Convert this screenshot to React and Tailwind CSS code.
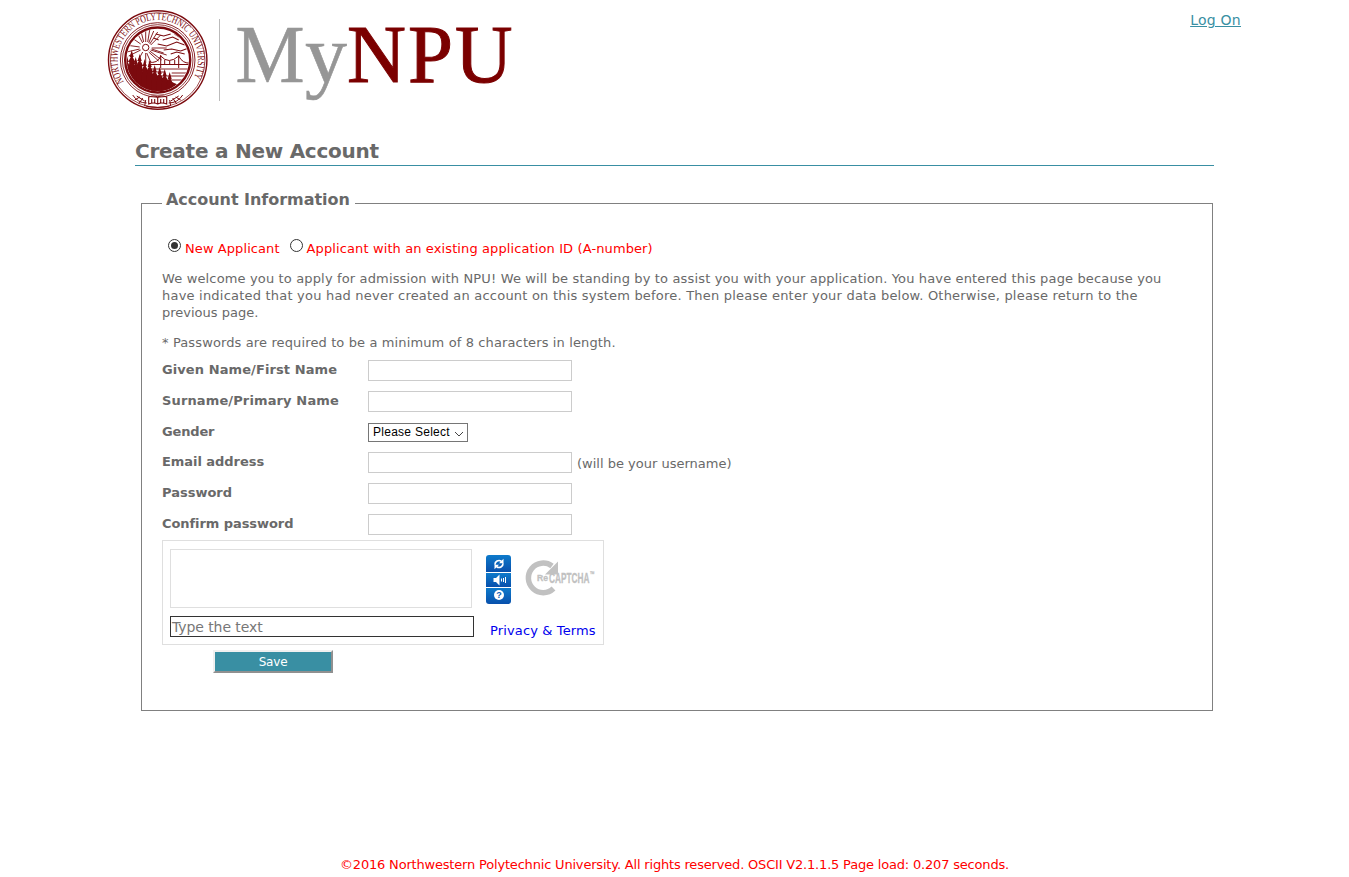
const sans = "font-['DejaVu_Sans','Liberation_Sans',sans-serif]";

function Seal() {
  const trees = [
    [127, 62, 22], [132, 57, 30], [136, 64, 24], [140, 61, 28], [145, 66, 24], [150, 67, 22],
    [155, 72, 18], [160, 74, 14], [165, 76, 11], [170, 79, 8],
  ];
  return (
    <svg className="block h-[102px] w-[102px] shrink-0" viewBox="107.3 9 102 102" fill="none" stroke="#7b0a0e">
      <defs>
        <path id="ring" d="M124.2 81.900 A40.200 40.200 0 1 1 191.800 81.900" />
        <clipPath id="disc"><circle cx="158" cy="60" r="31" /></clipPath>
      </defs>
      <circle cx="158" cy="60" r="49.200" strokeWidth="1.400" />
      <circle cx="158" cy="60" r="47.300" strokeWidth=".7" />
      <circle cx="158" cy="60" r="37.300" strokeWidth=".9" />
      <circle cx="158" cy="60" r="35.300" strokeWidth=".8" />
      <circle cx="158" cy="60" r="32.500" strokeWidth="2.400" />
      <text fill="#7b0a0e" stroke="none" fontSize="10.500" fontFamily="Liberation Serif, serif">
        <textPath href="#ring" textLength="167" lengthAdjust="spacingAndGlyphs">NORTHWESTERN POLYTECHNIC UNIVERSITY</textPath>
      </text>
      <g clipPath="url(#disc)">
        <circle cx="146" cy="47.500" r="3.200" strokeWidth="1" />
        <path strokeWidth=".9" d="M146 42V30M149 43l5-12M151 45l10-10M152 48l15 0M151 50l16 5M149 52l10 9M146 53v10M143 52l-5 9M141 50l-12 6M140 47l-14-2M141 44l-10-7M143 43l-6-11M148 42l2-12M150 44l8-12M140 49l-13 3M144 42l-3-12M152 49l12 4M150 51l12 9M147 53l4 9" />
        <path strokeWidth="1.100" d="M156 34l8 2 7-2M163 40l10-3 6 3M158 44l9 2 10-4 8 3M164 50l8-1 9 2 8-3M171 54l6-2 8 2M154 38l5 2M175 34l6 4" />
        <path strokeWidth="1" d="M149 64.500h42M161 55v13M179 55v13M149 62q9 2 12-6q8 9 18 0q4 8 12 7M165 60v4M170 61v3M175 60v4" />
        <path strokeWidth=".9" d="M148 69h42M150 72h15M172 73h18M155 76h34M163 80h24" />
        <path fill="#7b0a0e" stroke="none" d="M124 66l8 2 8 3 10 1 10 5 10 4 9 4-12 10h-30z" />
        {trees.map(([x, y, h]) => (
          <path key={x} fill="#7b0a0e" stroke="none" d={`M${x} ${y - 7}l2 7-1 0 2.500 5-1 0 1.500 ${h}h-8l1.500-${h}-1 0 2.500-5-1 0z`} />
        ))}
      </g>
      <path strokeWidth="1" d="M133 95q5 8 14 8M183 95q-5 8-14 8M135 100l5-3M139 104l4-6M145 106l1-6M181 100l-5-3M177 104l-4-6M171 106l-1-6M137 96l8 5M179 96l-8 5" />
      <path strokeWidth="1.100" d="M149 97q5-2 9 0q4-2 9 0v7q-5-2-9 0q-4-2-9 0zM158 97v7M152 99v4M155 99v4M161 99v4M164 99v4M146 106q12 3 24 0" />
    </svg>
  );
}

function Wordmark() {
  return (
    <svg className="ml-[13px] block h-[105px] w-[290px]" viewBox="233 5 290 105" fontFamily="Liberation Serif, serif" fontSize="82">
      <g fill="#969696" stroke="#969696" strokeWidth=".6">
        <text x="235.500" y="81.500" textLength="69" lengthAdjust="spacingAndGlyphs">M</text>
        <text x="305" y="81.500" textLength="42" lengthAdjust="spacingAndGlyphs">y</text>
      </g>
      <g fill="#7b0000" stroke="#7b0000" strokeWidth="1">
        <text x="347" y="81.500" textLength="59" lengthAdjust="spacingAndGlyphs">N</text>
        <text x="408" y="81.500" textLength="45" lengthAdjust="spacingAndGlyphs">P</text>
        <text x="455" y="81.500" textLength="57.500" lengthAdjust="spacingAndGlyphs">U</text>
      </g>
    </svg>
  );
}

function Radio({ checked }) {
  return (
    <span className="flex h-[13px] w-[13px] shrink-0 items-center justify-center rounded-full border border-[#333]">
      {checked && <span className="h-[7px] w-[7px] rounded-full bg-[#333]" />}
    </span>
  );
}

function Row({ label, tracking = "", h = "h-[31px]", children }) {
  return (
    <div className={`flex items-start ${h}`}>
      <label className={`w-[206px] text-[13px] leading-[19px] font-bold ${tracking}`}>{label}</label>
      {children}
    </div>
  );
}

const Field = () => <input className="block h-[21px] w-[204px] border border-[#ccc] bg-white" />;

function CaptchaButtons() {
  return (
    <svg className="mt-[6px] ml-[14px] block h-[49px] w-[25px]" viewBox="0 0 25 49">
      <defs>
        <linearGradient id="blue" x2="0" y2="1"><stop stopColor="#0d7acb" /><stop offset="1" stopColor="#0850ac" /></linearGradient>
        <clipPath id="round"><rect width="25" height="49" rx="3" /></clipPath>
      </defs>
      <g clipPath="url(#round)" fill="url(#blue)">
        <rect width="25" height="17" /><rect y="18" width="25" height="14" /><rect y="33" width="25" height="16" />
      </g>
      <path fill="none" stroke="#fff" strokeWidth="1.700" d="M9 9.800a4 4 0 0 1 6.300-3.500M17 8.200a4 4 0 0 1-6.300 3.500" />
      <path fill="#fff" d="M17.500 3.800v4.500h-4.500zM8.500 14.200v-4.500h4.500zM7.500 23h2.500l3.500-3.500v11l-3.500-3.500h-2.500z" />
      <path stroke="#fff" strokeWidth="1" d="M15.500 23.500v3M17.500 23v4M19.500 22v6" />
      <circle cx="13" cy="40" r="5" fill="#fff" />
      <text x="13" y="43.200" textAnchor="middle" fill="#0b5cb5" fontSize="9" fontWeight="bold" fontFamily="Liberation Sans, sans-serif">?</text>
    </svg>
  );
}

function CaptchaLogo() {
  return (
    <svg className="mt-[9px] ml-[13px] block h-[40px] w-[76px] overflow-visible" viewBox="524 558 76 40">
      <path fill="none" stroke="#c1c1c1" strokeWidth="5.500" d="M552 566a14.800 14.800 0 1 0 1.500 22.500" />
      <path fill="#c1c1c1" d="M558 561.500v13h-13z" />
      <g fill="#c1c1c1" stroke="#c1c1c1" strokeWidth=".3" fontFamily="Liberation Sans, sans-serif" fontWeight="bold">
        <text x="537" y="581" fontSize="8.500" textLength="11" lengthAdjust="spacingAndGlyphs">Re</text>
        <g transform="translate(549 583) scale(.59 1)">
          <text fontSize="14">CAPTCHA<tspan dx="1" dy="-6" fontSize="8">™</tspan></text>
        </g>
      </g>
    </svg>
  );
}

export default function App() {
  return (
    <div className={`flex h-[877px] w-[1349px] flex-col overflow-hidden bg-white text-[13px] text-[#696969] ${sans}`}>
      <header className="flex h-[120px] items-start pt-[9px] pr-[108px] pl-[107px]">
        <Seal />
        <div className="mt-[10px] ml-[10px] h-[82px] w-px bg-[#bbb]" />
        <div className="-mt-[4px]"><Wordmark /></div>
        <a href="#" className="mt-[1px] ml-auto text-[14px] leading-[20px] tracking-[0.25px] text-[#398fa3] underline">Log On</a>
      </header>

      <main className="mr-[135px] ml-[135px]">
        <h1 className="mt-[18px] h-[28px] border-b border-[#398fa3] text-[20px] leading-[26px] font-bold tracking-[-0.25px] whitespace-nowrap">Create a New Account</h1>
        <fieldset className="mt-[24px] mr-px ml-[6px] h-[521px] border border-[#808080] pl-[20px]">
          <legend className="h-[27px] pr-[5px] pl-[4px] text-[16px] leading-[20px] font-bold tracking-[-0.04px]">Account Information</legend>
          <div className="mt-[22px] flex h-[18px] items-start pl-[6px] leading-[19px] whitespace-nowrap text-[#f00]">
            <Radio checked />
            <span className="ml-[4px] tracking-[0.08px]">New Applicant</span>
            <span className="w-[10px]" />
            <Radio />
            <span className="ml-[4px] tracking-[0.11px]">Applicant with an existing application ID (A-number)</span>
          </div>
          <p className="mt-[13px] leading-[17px] whitespace-nowrap">
            <span className="tracking-[0.147px]">We welcome you to apply for admission with NPU! We will be standing by to assist you with your application. You have entered this page because you</span><br />
            <span className="tracking-[0.21px]">have indicated that you had never created an account on this system before. Then please enter your data below. Otherwise, please return to the</span><br />
            <span>previous page.</span>
          </p>
          <p className="mt-[13px] mb-[9px] leading-[17px] tracking-[0.125px]">* Passwords are required to be a minimum of 8 characters in length.</p>
          <Row label="Given Name/First Name" tracking="tracking-[0.09px]"><Field /></Row>
          <Row label="Surname/Primary Name" tracking="tracking-[0.13px]"><Field /></Row>
          <Row label="Gender" tracking="tracking-[-0.15px]" h="h-[30px]">
            <div className="mt-px flex h-[19px] w-[100px] items-center border border-[#767676] pl-[4px] font-['Liberation_Sans',sans-serif] text-[12px] tracking-[0.27px] text-black">
              <span className="-mt-px">Please Select</span>
              <svg className="mt-[3px] mr-[3px] ml-auto h-[6px] w-[10px]" viewBox="0 0 10 6" fill="none" stroke="#444"><path d="M1 1l4 4 4-4" /></svg>
            </div>
          </Row>
          <Row label="Email address" tracking="tracking-[-0.05px]">
            <Field />
            <span className="mt-[2px] ml-[5px] leading-[19px]">(will be your username)</span>
          </Row>
          <Row label="Password"><Field /></Row>
          <Row label="Confirm password" tracking="tracking-[-0.07px]" h="h-[26px]"><Field /></Row>
          <div className="h-[105px] w-[442px] border border-[#dfdfdf] pt-[8px] pl-[7px]">
            <div className="flex h-[67px] items-start">
              <div className="h-[59px] w-[302px] border border-[#dfdfdf]" />
              <CaptchaButtons />
              <CaptchaLogo />
            </div>
            <div className="flex items-start">
              <div className="h-[21px] w-[304px] border border-[#333] pl-[1px] text-[14px] leading-[20px] tracking-[-0.08px] text-[#777]">Type the text</div>
              <a href="#" className="mt-[5px] ml-[16px] leading-[19px] tracking-[0.13px] whitespace-nowrap text-[#0000ee]">{"Privacy & Terms"}</a>
            </div>
          </div>
          <button className="mt-[5px] ml-[51px] block h-[23px] w-[120px] border-2 border-t-[#f0f0f0] border-r-[#909090] border-b-[#909090] border-l-[#f0f0f0] bg-[#398fa3] pt-px text-[12px] leading-[18px] tracking-[-0.2px] text-white">Save</button>
        </fieldset>
      </main>
      <footer className="mt-auto mb-[3px] text-center leading-[19px] tracking-[-0.185px] text-[#f00]">©2016 Northwestern Polytechnic University. All rights reserved. OSCII V2.1.1.5 Page load: 0.207 seconds.</footer>
    </div>
  );
}
